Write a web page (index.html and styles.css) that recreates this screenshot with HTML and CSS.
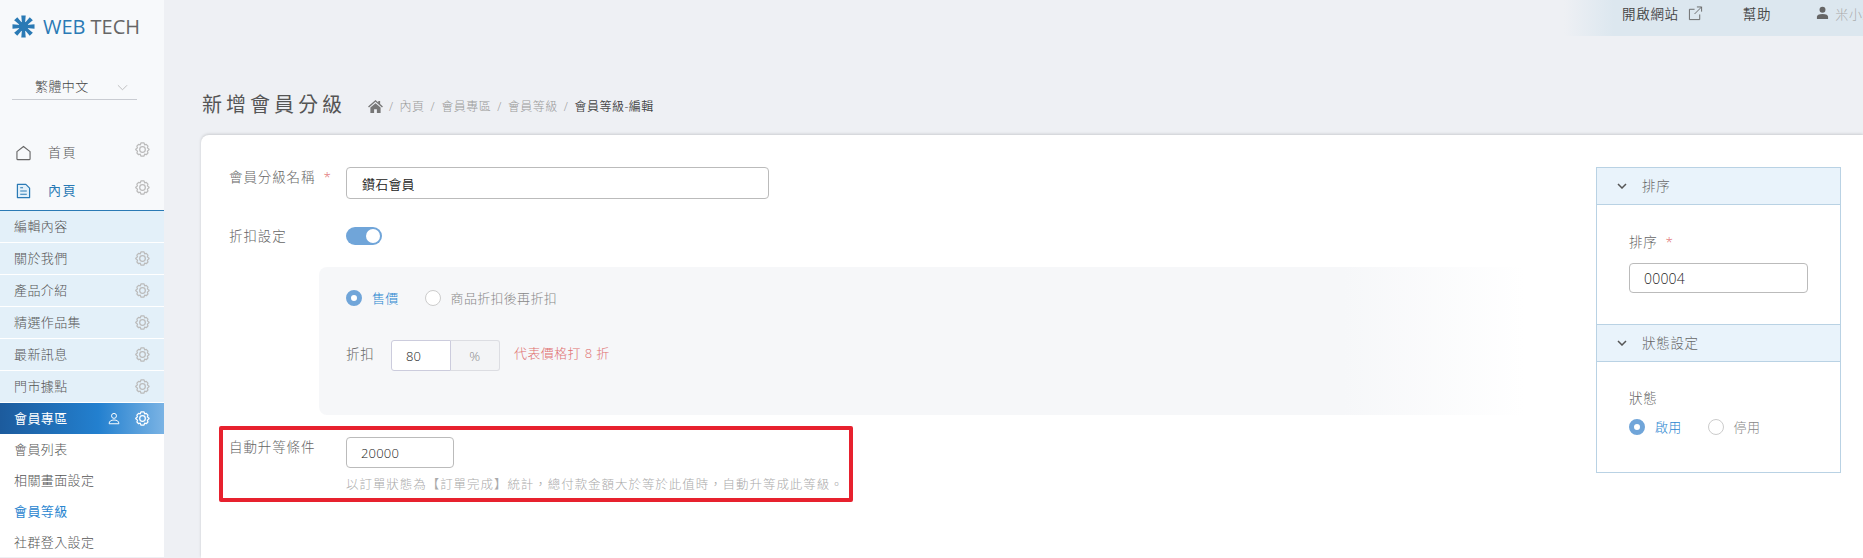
FILE: index.html
```html
<!DOCTYPE html>
<html lang="zh-Hant">
<head>
    <meta charset="UTF-8">
    <title>新增會員分級</title>
    <link rel="stylesheet" href="styles.css">
</head>
<body>
    <svg class="defs">
        <symbol id="gear" viewBox="0 0 24 24">
            <path fill="none" stroke="currentColor" stroke-width="2" stroke-linejoin="round" d="M9.500 1.500h5l.9 3 2.600-.8 2.700 2.800-.9 2.900 2.700 2.100-.1 1-2.600 2.100.9 3-2.700 2.700-2.600-.9-1 3.100h-5l-1-3.100-2.600.9-2.700-2.700.9-3L1.300 12.500l-.1-1 2.700-2.100L3 6.500l2.700-2.800 2.800.8z"/>
            <circle cx="12" cy="12" r="4.500" fill="none" stroke="currentColor" stroke-width="2"/>
        </symbol>
        <symbol id="user" viewBox="0 0 16 16">
            <circle cx="8" cy="4.500" r="3.300" fill="none" stroke="currentColor" stroke-width="1.300"/>
            <path fill="none" stroke="currentColor" stroke-width="1.300" d="M1.500 15c0-3.500 2.500-5 6.500-5s6.500 1.500 6.500 5z"/>
        </symbol>
    </svg>

    <div class="layout">
        <aside class="sidebar">
            <div class="logo">
                <svg class="logo-mark" viewBox="0 0 24 24">
                    <g fill="#2a7ab5">
                        <circle cx="12" cy="12" r="5"/>
                        <path d="M9.700 .5h4.600L13.600 9h-3.200z"/>
                        <path d="M9.700 .5h4.600L13.600 9h-3.200z" transform="rotate(45 12 12)"/>
                        <path d="M9.700 .5h4.600L13.600 9h-3.200z" transform="rotate(90 12 12)"/>
                        <path d="M9.700 .5h4.600L13.600 9h-3.200z" transform="rotate(135 12 12)"/>
                        <path d="M9.700 .5h4.600L13.600 9h-3.200z" transform="rotate(180 12 12)"/>
                        <path d="M9.700 .5h4.600L13.600 9h-3.200z" transform="rotate(225 12 12)"/>
                        <path d="M9.700 .5h4.600L13.600 9h-3.200z" transform="rotate(270 12 12)"/>
                        <path d="M9.700 .5h4.600L13.600 9h-3.200z" transform="rotate(315 12 12)"/>
                    </g>
                </svg>
                <span class="logo-web">WEB</span><span class="logo-tech">TECH</span>
            </div>

            <div class="lang-select">
                <span>繁體中文</span>
                <svg class="lang-arrow" viewBox="0 0 12 7"><path d="M1 1l5 5 5-5" fill="none" stroke="#bbb" stroke-width="1"/></svg>
            </div>

            <nav class="menu">
                <div class="menu-top">
                    <svg class="menu-icon" viewBox="0 0 16 16"><path d="M8 1L1 6.500V14a1 1 0 0 0 1 1h12a1 1 0 0 0 1-1V6.500z" fill="none" stroke="#666" stroke-width="1.200" stroke-linejoin="round"/></svg>
                    <span class="menu-label">首頁</span>
                    <svg class="gear gear-top"><use href="#gear"/></svg>
                </div>
                <div class="menu-top is-open">
                    <svg class="menu-icon" viewBox="0 0 16 16"><path d="M1.500 1h9l4 4v10h-13z" fill="#e3f0f9" stroke="#2a7ab5" stroke-width="1.300" stroke-linejoin="round"/><path d="M4.500 8h7M4.500 11.500h7M4.500 4.500h3" stroke="#2a7ab5" stroke-width="1.200"/></svg>
                    <span class="menu-label">內頁</span>
                    <svg class="gear gear-top"><use href="#gear"/></svg>
                </div>
                <ul class="sub-list">
                    <li class="sub-item"><span class="sub-text">編輯內容</span></li>
                    <li class="sub-item"><span class="sub-text">關於我們</span><svg class="gear"><use href="#gear"/></svg></li>
                    <li class="sub-item"><span class="sub-text">產品介紹</span><svg class="gear"><use href="#gear"/></svg></li>
                    <li class="sub-item"><span class="sub-text">精選作品集</span><svg class="gear"><use href="#gear"/></svg></li>
                    <li class="sub-item"><span class="sub-text">最新訊息</span><svg class="gear"><use href="#gear"/></svg></li>
                    <li class="sub-item"><span class="sub-text">門市據點</span><svg class="gear"><use href="#gear"/></svg></li>
                    <li class="sub-item is-active"><span class="sub-text">會員專區</span><svg class="active-user"><use href="#user"/></svg><svg class="gear"><use href="#gear"/></svg></li>
                </ul>
                <ul class="child-list">
                    <li>會員列表</li>
                    <li>相關畫面設定</li>
                    <li class="is-current">會員等級</li>
                    <li>社群登入設定</li>
                </ul>
            </nav>
        </aside>

        <main class="main">
            <div class="topbar">
                <span class="top-link">開啟網站
                    <svg class="top-icon" viewBox="0 0 16 16"><path d="M12.500 9v5.500h-11v-11H7M9.500 1h5v5M14.500 1L7 8.500" fill="none" stroke="#666" stroke-width="1"/></svg>
                </span>
                <span class="top-link">幫助</span>
                <span class="top-user">
                    <svg class="top-user-icon" viewBox="0 0 14 14"><circle cx="7" cy="3.500" r="3.200" fill="#666"/><path d="M1 13.500V11c0-1.800 2-3 6-3s6 1.200 6 3v2.500z" fill="#666"/></svg>
                    米小編
                </span>
            </div>

            <div class="page-head">
                <h1>新增會員分級</h1>
                <div class="breadcrumb">
                    <svg class="home-icon" viewBox="0 0 16 14"><path d="M8 0L0 7l1 1 7-6 7 6 1-1-3-2.600V1h-2v1.700z" fill="#777"/><path d="M8 3.500L2.500 8v6h4V10h3v4h4V8z" fill="#777"/></svg>
                    <span class="crumb-sep">/</span><span>內頁</span>
                    <span class="crumb-sep">/</span><span>會員專區</span>
                    <span class="crumb-sep">/</span><span>會員等級</span>
                    <span class="crumb-sep">/</span><span class="crumb-last">會員等級-編輯</span>
                </div>
            </div>

            <div class="card">
                <form class="form">
                    <div class="form-row row-name">
                        <label class="form-label">會員分級名稱<em class="required">*</em></label>
                        <div class="fake-input input-name">鑽石會員</div>
                    </div>
                    <div class="form-row row-toggle">
                        <label class="form-label">折扣設定</label>
                        <span class="toggle"><span class="toggle-knob"></span></span>
                    </div>
                    <div class="discount-panel">
                        <div class="radio-group">
                            <span class="radio is-on"></span><span class="radio-text is-on">售價</span>
                            <span class="radio"></span><span class="radio-text">商品折扣後再折扣</span>
                        </div>
                        <div class="discount-row">
                            <label class="discount-label">折扣</label>
                            <div class="fake-input input-discount">80</div>
                            <div class="input-unit">%</div>
                            <span class="discount-note">代表價格打 8 折</span>
                        </div>
                    </div>
                    <div class="form-row row-upgrade">
                        <label class="form-label">自動升等條件</label>
                        <div>
                            <div class="fake-input input-upgrade">20000</div>
                            <p class="hint">以訂單狀態為【訂單完成】統計，總付款金額大於等於此值時，自動升等成此等級。</p>
                        </div>
                    </div>
                </form>

                <div class="side-panel">
                    <div class="side-head">
                        <svg class="chevron" viewBox="0 0 10 6"><path d="M1 1l4 4 4-4" fill="none" stroke="#555" stroke-width="1.500"/></svg>
                        <span class="side-title">排序</span>
                    </div>
                    <div class="side-body body-sort">
                        <label class="side-label">排序<em class="required">*</em></label>
                        <div class="fake-input input-sort">00004</div>
                    </div>
                    <div class="side-head">
                        <svg class="chevron" viewBox="0 0 10 6"><path d="M1 1l4 4 4-4" fill="none" stroke="#555" stroke-width="1.500"/></svg>
                        <span class="side-title">狀態設定</span>
                    </div>
                    <div class="side-body body-status">
                        <label class="side-label">狀態</label>
                        <div class="radio-group">
                            <span class="radio is-on"></span><span class="radio-text is-on">啟用</span>
                            <span class="radio"></span><span class="radio-text">停用</span>
                        </div>
                    </div>
                </div>
            </div>
        </main>
    </div>
</body>
</html>
```

FILE: styles.css
```css
* {
    box-sizing: border-box;
}

html, body {
    height: 100%;
}

body {
    margin: 0;
    overflow: hidden;
    background-color: #eef0f4;
    color: #555;
    font-family: "Open Sans", "Noto Sans CJK TC", sans-serif;
    font-size: 13.500px;
    font-weight: 300;
    letter-spacing: 0.700px;
}

.defs {
    display: none;
}

.layout {
    display: flex;
    height: 558px;
}

/* sidebar */
.sidebar {
    flex: 0 0 164px;
    height: 557px;
    background-color: #f7f9fb;
    overflow: hidden;
    font-size: 13px;
    letter-spacing: 0.400px;
}

.logo {
    display: flex;
    align-items: center;
    height: 52px;
    padding-left: 12px;
    font-size: 20px;
    font-weight: 400;
    letter-spacing: 0;
}

.logo-mark {
    width: 23px;
    height: 23px;
    margin-right: 8px;
}

.logo-web {
    color: #2a7ab5;
    margin-right: 5px;
}

.logo-tech {
    color: #666;
}

.lang-select {
    display: flex;
    align-items: center;
    height: 26px;
    margin: 22px 27px 0 12px;
    padding: 0 9px 2px 23px;
    border-bottom: 1px solid #c9ccd2;
    justify-content: space-between;
    color: #444;
    font-size: 13px;
    letter-spacing: 0.400px;
}

.lang-arrow {
    width: 11px;
    height: 7px;
    margin-top: 3px;
}

.menu {
    margin-top: 34px;
}

.menu-top {
    position: relative;
    display: flex;
    align-items: center;
    height: 38px;
    padding-left: 16px;
    color: #555;
}

.menu-top.is-open {
    color: #2a7ab5;
    font-weight: 400;
}

.menu-icon {
    width: 15px;
    height: 16px;
    margin-right: 17px;
}

.menu-label {
    padding-bottom: 3px;
    font-size: 13px;
    letter-spacing: 1.500px;
}

.gear {
    width: 15px;
    height: 15px;
    margin-left: auto;
    color: #bbb;
}

.gear-top {
    margin-right: 14px;
    margin-bottom: 8px;
}

.sub-list, .child-list {
    margin: 0;
    padding: 0;
    list-style: none;
}

.sub-list {
    border-top: 1px solid #2a7ab5;
}

.sub-item {
    display: flex;
    align-items: center;
    height: 32px;
    padding: 0 14px;
    background-color: #e3f0f9;
    border-bottom: 1px solid #fff;
}

.sub-text {
    padding-bottom: 2px;
}

.sub-item.is-active {
    height: 31px;
    background: linear-gradient(to right, #1c5b9d, #2380cf 60%, #7ab3e4);
    border-bottom: 0;
    color: #fff;
    font-weight: 400;
}

.sub-item.is-active .gear {
    margin-left: 0;
    color: #fff;
}

.active-user {
    width: 12px;
    height: 13px;
    margin-left: auto;
    margin-right: 15px;
    color: #fff;
}

.child-list {
    background-color: #fff;
}

.child-list li {
    display: flex;
    align-items: center;
    height: 31px;
    padding: 0 0 2px 14px;
}

.child-list .is-current {
    color: #2a86d0;
    font-weight: 400;
}

/* main */
.main {
    flex: 1;
    min-width: 0;
}

.topbar {
    display: flex;
    align-items: center;
    height: 36px;
    padding: 0 0 10px 1458px;
    background: linear-gradient(to right, #eef0f4 1400px, #dce7ef 1450px);
    color: #444;
    white-space: nowrap;
    font-weight: 350;
}

.top-link {
    display: flex;
    align-items: center;
}

.top-icon {
    width: 15px;
    height: 15px;
    margin-left: 9px;
    margin-right: 40px;
}

.top-user {
    display: flex;
    align-items: center;
    margin-left: 45px;
    color: #aaa;
    font-size: 13px;
    font-weight: 300;
}

.top-user-icon {
    width: 13px;
    height: 14px;
    margin-right: 6px;
}

.page-head {
    display: flex;
    align-items: center;
    height: 40px;
    margin-top: 47px;
    padding-left: 38px;
}

.page-head h1 {
    margin: 0 22px 0 0;
    color: #555;
    font-size: 20px;
    font-weight: 400;
    letter-spacing: 4px;
}

.breadcrumb {
    display: flex;
    align-items: center;
    margin-top: 6px;
    color: #999;
    font-size: 12px;
    letter-spacing: 0.500px;
}

.home-icon {
    width: 15px;
    height: 13px;
}

.crumb-sep {
    margin: 0 6px;
}

.crumb-last {
    color: #444;
    font-weight: 350;
}

.card {
    display: flex;
    height: 423px;
    margin: 12px 0 0 37px;
    padding: 32px 22px 0 28px;
    background-color: #fff;
    border-radius: 8px 0 0 0;
    box-shadow: 0 -1px 3px rgba(0, 0, 0, 0.15);
}

.form {
    flex: 1;
    min-width: 0;
}

.form-row {
    display: flex;
}

.form-label {
    flex: 0 0 117px;
    color: #666;
    line-height: 20px;
    letter-spacing: 0.900px;
}

.required {
    margin-left: 8px;
    color: #e07070;
    font-style: normal;
}

.fake-input {
    display: flex;
    align-items: center;
    height: 32px;
    padding-left: 15px;
    background-color: #fff;
    border: 1px solid #bbb;
    border-radius: 4px;
    color: #222;
    font-size: 13px;
    font-weight: 350;
    letter-spacing: 0.200px;
}

.input-name {
    width: 423px;
}

.row-toggle {
    align-items: center;
    margin-top: 28px;
    height: 18px;
}

.toggle {
    display: flex;
    justify-content: flex-end;
    align-items: center;
    width: 36px;
    height: 18px;
    padding-right: 2px;
    background-color: #70a5d9;
    border-radius: 9px;
}

.toggle-knob {
    width: 14px;
    height: 14px;
    background-color: #fff;
    border-radius: 50%;
}

.discount-panel {
    height: 148px;
    margin: 22px 0 0 90px;
    padding: 23px 0 0 27px;
    background: linear-gradient(to right, #f6f7f9 85%, #fff 100%);
    border-radius: 8px 0 0 8px;
}

.radio-group {
    display: flex;
    align-items: center;
    height: 16px;
    color: #888;
}

.radio {
    width: 16px;
    height: 16px;
    margin-right: 10px;
    background-color: #fff;
    border: 1px solid #ccc;
    border-radius: 50%;
}

.radio.is-on {
    border: 5px solid #70a5d9;
}

.radio-text {
    margin-right: 26px;
    font-size: 13px;
    letter-spacing: 0.300px;
    padding-bottom: 2px;
}

.radio-text.is-on {
    color: #2a86d0;
}

.discount-row {
    display: flex;
    align-items: center;
    margin-top: 34px;
    height: 31px;
}

.discount-label {
    width: 45px;
    color: #666;
    margin-bottom: 6px;
}

.input-discount {
    width: 60px;
    height: 31px;
    padding-left: 14px;
    border-color: #ccd;
    border-radius: 3px 0 0 3px;
}

.input-unit {
    display: flex;
    align-items: center;
    justify-content: center;
    width: 49px;
    height: 31px;
    background-color: #f3f4f6;
    border: 1px solid #dcdde2;
    border-left: 0;
    border-radius: 0 3px 3px 0;
    color: #888;
}

.discount-note {
    margin: 0 0 6px 14px;
    color: #e07070;
    font-size: 13px;
    letter-spacing: 0.400px;
}

.row-upgrade {
    width: 634px;
    height: 76px;
    margin: 11px 0 0 -10px;
    padding: 7px 0 0 6px;
    border: 4px solid #e7212e;
    border-radius: 2px;
}

.input-upgrade {
    width: 108px;
    height: 31px;
    padding-left: 14px;
}

.hint {
    margin: 6px 0 0;
    color: #aaa;
    font-size: 12.500px;
    letter-spacing: 0.950px;
    white-space: nowrap;
}

/* right panel */
.side-panel {
    flex: 0 0 245px;
    height: 306px;
    border: 1px solid #b9d2e4;
    margin-left: 72px;
}

.side-head {
    display: flex;
    align-items: center;
    height: 37px;
    padding-left: 20px;
    background-color: #e9f3fb;
    border-bottom: 1px solid #b9d2e4;
    color: #666;
}

.chevron {
    width: 10px;
    height: 6px;
    margin-right: 15px;
}

.side-title {
    padding-bottom: 2px;
}

.side-body {
    padding: 0 32px;
}

.body-sort {
    height: 120px;
    padding-top: 26px;
    border-bottom: 1px solid #b9d2e4;
}

.body-status {
    padding-top: 25px;
}

.side-label {
    display: block;
    height: 20px;
    color: #666;
}

.input-sort {
    width: 179px;
    height: 30px;
    margin-top: 12px;
    padding-left: 14px;
    font-size: 14px;
}

.body-status .radio-group {
    margin-top: 12px;
}
```
